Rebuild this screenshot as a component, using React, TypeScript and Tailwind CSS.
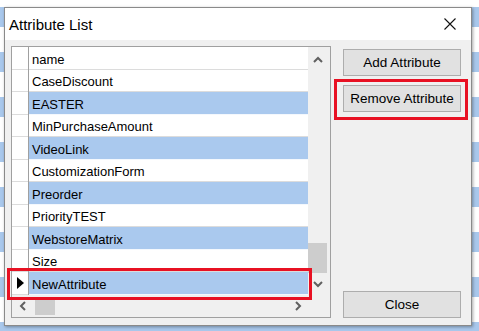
import React from 'react'

const rows = [
  { label: 'name', selected: false },
  { label: 'CaseDiscount', selected: false },
  { label: 'EASTER', selected: true },
  { label: 'MinPurchaseAmount', selected: false },
  { label: 'VideoLink', selected: true },
  { label: 'CustomizationForm', selected: false },
  { label: 'Preorder', selected: true },
  { label: 'PriorityTEST', selected: false },
  { label: 'WebstoreMatrix', selected: true },
  { label: 'Size', selected: false },
  { label: 'NewAttribute', selected: true, current: true },
]

function Chevron({ dir }: { dir: 'up' | 'down' | 'left' | 'right' }) {
  const pts = {
    up: '1,6 5,2 9,6',
    down: '1,2 5,6 9,2',
    left: '6,1 2,5 6,9',
    right: '2,1 6,5 2,9',
  }[dir]
  const vertical = dir === 'up' || dir === 'down'
  return (
    <svg width={vertical ? 10 : 8} height={vertical ? 8 : 10} viewBox={vertical ? '0 0 10 8' : '0 0 8 10'}>
      <polyline points={pts} fill="none" stroke="#606060" strokeWidth={2} />
    </svg>
  )
}

function WinButton({ label }: { label: string }) {
  return (
    <button className="w-[118px] h-[27px] bg-[#e1e1e1] border border-[#adadad] text-[13.5px] text-black flex items-center justify-center pt-[1px]">
      {label}
    </button>
  )
}

export default function App() {
  return (
    <div className="relative w-[479px] h-[331px] overflow-hidden pt-[7px] pl-[4px] font-['Liberation_Sans',Arial,sans-serif] bg-[repeating-linear-gradient(180deg,#ffffff_0px,#ffffff_7px,#a9c8ec_7px,#a9c8ec_27px,#ffffff_27px,#ffffff_45px)]">
      <div className="w-[468px] h-[319px] flex flex-col border border-[#8a8a8a] bg-[#f0f0f0] shadow-[1px_1px_3px_rgba(0,0,0,0.35)]">
        {/* title bar */}
        <div className="h-[32px] shrink-0 bg-white flex items-center justify-between pl-[4px] pr-[15px]">
          <span className="text-[15px] text-black leading-none">Attribute List</span>
          <svg width="12" height="12" viewBox="0 0 12 12">
            <path d="M0.5 0.5 L11.5 11.5 M11.5 0.5 L0.5 11.5" stroke="#111" strokeWidth={1.1} />
          </svg>
        </div>

        {/* body */}
        <div className="flex-1 flex pl-[6px] pt-[6px]">
          {/* grid */}
          <div className="w-[320px] h-[272px] border border-[#a0a0a0] bg-white flex flex-col">
            <div className="h-[248px] shrink-0 flex overflow-hidden">
              <div className="w-[17px] flex flex-col border-r border-[#a0a0a0]">
                {rows.map(r => (
                  <div key={r.label} className="h-[22.5px] shrink-0 border-b border-[#dcdcdc] flex items-center justify-center pt-[1px]">
                    {r.current && (
                      <svg width="7" height="12" viewBox="0 0 7 12">
                        <polygon points="0,0 7,6 0,12" fill="#000" />
                      </svg>
                    )}
                  </div>
                ))}
              </div>
              <div className="w-[279px] flex flex-col">
                {rows.map(r => (
                  <div
                    key={r.label}
                    className={`h-[22.5px] shrink-0 border-b flex items-center pl-[3px] pt-[3px] text-[13px] leading-[15px] text-black ${
                      r.selected ? 'bg-[#aac9ee] border-[#f4f8fd]' : 'border-[#dcdcdc]'
                    }`}
                  >
                    {r.label}
                  </div>
                ))}
              </div>
              {/* vertical scrollbar */}
              <div className="w-[22px] bg-[#f0f0f0] flex flex-col">
                <div className="h-[25px] w-[19px] flex items-center justify-center">
                  <Chevron dir="up" />
                </div>
                <div className="flex-1 flex flex-col justify-end">
                  <div className="h-[30px] w-[19px] bg-[#cdcdcd]" />
                </div>
                <div className="h-[22px] w-[19px] flex items-center justify-center">
                  <Chevron dir="down" />
                </div>
              </div>
            </div>
            {/* horizontal scrollbar */}
            <div className="flex-1 flex bg-[#f0f0f0]">
              <div className="w-[296px] flex items-center">
                <div className="w-[22px] flex items-center justify-center">
                  <Chevron dir="left" />
                </div>
                <div className="ml-[1px] w-[20px] h-[18px] bg-[#cdcdcd]" />
                <div className="flex-1" />
                <div className="w-[20px] flex items-center justify-center">
                  <Chevron dir="right" />
                </div>
              </div>
              <div className="w-[22px]" />
            </div>
          </div>

          {/* buttons */}
          <div className="ml-[12px] h-[272px] flex flex-col pt-[3px]">
            <WinButton label="Add Attribute" />
            <div className="mt-[9px]">
              <WinButton label="Remove Attribute" />
            </div>
            <div className="mt-auto">
              <WinButton label="Close" />
            </div>
          </div>
        </div>
      </div>

      {/* annotation highlights */}
      <div className="absolute left-[7px] top-[268px] w-[305px] h-[32px] border-[3px] border-[#e81123]" />
      <div className="absolute left-[334px] top-[79px] w-[134px] h-[41px] border-[3px] border-[#e81123]" />
    </div>
  )
}
